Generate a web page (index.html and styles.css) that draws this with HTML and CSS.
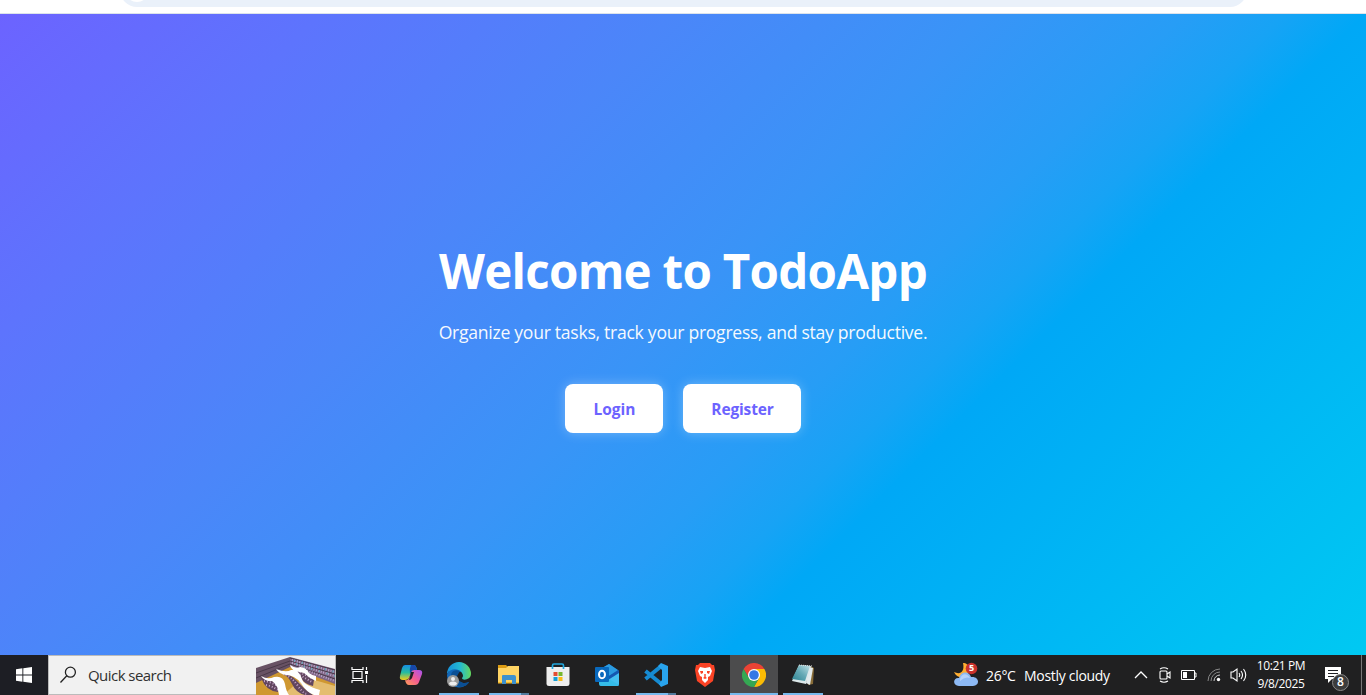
FILE: index.html
```
<!DOCTYPE html>
<html lang="en">
<head>
<meta charset="utf-8">
<title>TodoApp</title>
<link rel="stylesheet" href="styles.css">
</head>
<body>
<header class="browser-bar"><div class="address"><span class="site-dot"></span></div></header>
<main class="hero">
  <h1 class="title">Welcome to TodoApp</h1>
  <p class="subtitle">Organize your tasks, track your progress, and stay productive.</p>
  <div class="actions"><button class="btn login">Login</button><button class="btn register">Register</button></div>
</main>
<footer class="taskbar">
  <div class="start"><svg width="16" height="16" viewBox="0 0 16 16" fill="#fff"><path d="M0 2.2 6.4 1.3V7.5H0zM7.3 1.2 16 0V7.5H7.3zM0 8.4H6.4V14.7L0 13.8zM7.3 8.4H16V16L7.3 14.8z"/></svg></div>
  <div class="search">
    <svg class="lens" width="18" height="18" viewBox="0 0 18 18" fill="none" stroke="#222" stroke-width="1.3"><circle cx="10.4" cy="6.2" r="5"/><path d="M6.8 9.8.5 16.5"/></svg>
    <span class="search-text">Quick search</span>
    <svg class="library" width="79" height="39" viewBox="0 0 79 39">
      <path fill="#cf9831" d="M0 24 36 9 79 27V39H0z"/>
      <path fill="#e4bd70" d="M27 39 48 21 79 30V39z"/>
      <path fill="#685264" d="M0 12 34 1V11L0 27z"/>
      <path fill="#806584" d="M34 1 79 13V28L34 11z"/>
      <path stroke="#493948" d="M0 17 34 5M0 22 34 8M34 2 79 14M34 5 79 18M34 8 79 23" fill="none"/>
      <path stroke="#b8a7cb" stroke-width="2.2" stroke-dasharray="1 1.5" d="M36 4 79 16M36 7 79 20M44 12 79 25" fill="none"/>
      <path stroke="#5db0be" stroke-width="2.2" stroke-dasharray="1 7" d="M38 4.5 79 16M40 8 79 20" fill="none"/>
      <path fill="#62465f" d="M5 22Q15 24 22 27V36Q10 35 5 22zM23 16Q35 18 42 26T57 39H49Q40 37 36 28T23 16zM36 12Q46 16 52 18L58 24 57 30Q48 28 45 22z"/>
      <path stroke="#c6a6c9" stroke-width="2" stroke-dasharray="1 2" fill="none" d="M8 25Q15 26 22 30M10 29Q16 30 22 34M27 18Q35 20 42 30T52 37M41 15 56 22M44 19 56 26"/>
      <path fill="#fff" d="M5 20Q12 24 18 21 27 19 29 28 30 35 33 39H23Q22 29 16 25 9 26 5 20zM20 13Q30 17 35 14 43 13 46 23 47 29 64 34L63 39H58Q50 36 45 27 38 19 30 19 23 18 20 13zM34 9Q40 13 44 11 50 11 53 17 57 20 60 20V25Q53 22 48 17L39 15Q35 13 34 9z"/>
    </svg>
  </div>
  <div class="app task-view"><svg width="18" height="18" viewBox="0 0 18 18" fill="none" stroke="#fff" stroke-width="1.2"><path d="M1 1V3.5H12V1M1 17V14.5H12V17M2 5.5H11V12.5H2zM15.5 1V4M15.5 9V17"/><path fill="#fff" stroke="none" d="M14 5H17V8H14z"/></svg></div>
  <div class="app copilot"><svg width="24" height="24" viewBox="0 0 24 24"><defs><linearGradient id="ca" x1="0" y1="0" x2="0" y2="1"><stop stop-color="#168de4"/><stop offset=".5" stop-color="#27bca0"/><stop offset="1" stop-color="#f4cc16"/></linearGradient><linearGradient id="cb" x1="1" y1="0" x2="0" y2="1"><stop stop-color="#a653ef"/><stop offset=".5" stop-color="#f35a93"/><stop offset="1" stop-color="#ff9f54"/></linearGradient></defs><path fill="url(#ca)" d="M6 2H15Q17 2 18 7H15Q13 7 12 10L10 15Q9 17 6 17H4Q0 17 1 13L3 5Q4 2 6 2z"/><path fill="#1747a8" d="M12 2H15Q17 2 18 7H15Q13 7 12 9L11 11Q10 6 12 2z"/><path fill="url(#cb)" d="M15 7H20Q24 7 23 11L20 19Q19 22 16 22H10Q7 22 6 17Q9 18 10 15L12 10Q13 7 15 7z"/><path fill="#202125" d="M12 9H15L13 15Q12 17 10 17Z"/></svg></div>
  <div class="app running"><svg width="26" height="26" viewBox="0 0 26 26"><defs><linearGradient id="ea"><stop stop-color="#168fda"/><stop offset=".55" stop-color="#24bad0"/><stop offset="1" stop-color="#64d85d"/></linearGradient></defs><path fill="#1267b9" d="M1 13A12 12 0 0 0 23 20C17 23 11 19 11 14Q11 9 17 10C11 3 3 6 1 13z"/><path fill="url(#ea)" d="M1 12A12 12 0 0 1 25 12C25 18 16 19 16 16Q18 14 16 11C13 6 4 6 1 12z"/><path fill="#0b4f94" d="M6 10C3 16 7 24 14 25 20 25 23 21 23 20 17 23 11 19 11 14L14 9Q9 7 6 10z"/><circle cx="7" cy="19" r="6" fill="#999"/><circle cx="7" cy="17" r="2" fill="#eee"/><path fill="#eee" d="M3 22Q3 19.500 7 19.500T11 22L9 23.500H5z"/></svg></div>
  <div class="app running split"><svg width="24" height="22" viewBox="0 0 24 22"><path fill="#dc9c13" d="M1 1H9L11 3H22V8H1z"/><path fill="#ffd464" d="M1 4H9L11 2H22V19H1z"/><path fill="#f5b928" d="M1 18H22V19.5H1z"/><path fill="#3d91ce" d="M5 12Q5 11 6 11H17Q19 11 19 13V20H15V16H9V20H5z"/></svg></div>
  <div class="app"><svg width="24" height="24" viewBox="0 0 24 24"><path fill="#eee" d="M.5 4H23.500V21Q23.500 23 21 23H3Q.5 23 .5 21z"/><path fill="none" stroke="#20a8df" stroke-width="1.7" d="M6.500 6V2.500Q6.500 1 8 1H16Q17.500 1 17.500 2.500V6"/><path fill="#e54d31" d="M7.500 9H11.500V13H7.500z"/><path fill="#77b72d" d="M12.500 9H16.500V13H12.500z"/><path fill="#149dd5" d="M7.500 14H11.500V18H7.500z"/><path fill="#fabb15" d="M12.500 14H16.500V18H12.500z"/></svg></div>
  <div class="app"><svg width="26" height="24" viewBox="0 0 26 24"><path fill="#1464b9" d="M5 7 15 1 25 8V21Q25 23 23 23H6z"/><path fill="#2b9be0" d="M8 5 15 1 24 7 15 13 8 11z"/><path fill="#1557b0" d="M15 13 25 7V12L16 18z"/><path fill="#43bff0" d="M14 17 25 10V21Q25 23 23 23H10z"/><path fill="#35bce8" d="M5 17 15 16 25 22Q24 23 22 23H7Q5 23 5 21z"/><rect x="1" y="4" width="14" height="15" rx="1" fill="#0969bd"/><ellipse cx="8" cy="11.500" rx="3" ry="3.700" fill="none" stroke="#fff" stroke-width="2"/></svg></div>
  <div class="app running split"><svg width="26" height="26" viewBox="0 0 26 26"><path fill="none" stroke="#168bd2" stroke-width="4" d="M2.500 9 19 22.500M2.500 17 19 3.500"/><path fill="#29a4ed" d="M18 1 25 4V22L18 25 16 22 19 18V8L15 4z"/></svg></div>
  <div class="app"><svg width="22" height="24" viewBox="0 0 22 24"><path fill="#fb4325" d="M6 0H16L18 2H20L21 7 19 18 11 24 3 18 1 7 2 2H4z"/><path fill="#fff" d="M6 4 11 5 16 4 18 8 16 13 14 14 14 17 11 20 8 17 8 14 6 13 4 8z"/><path fill="#fb4325" d="M6 8 9 8 9 10 7 11zM16 8 13 8 13 10 15 11zM10.300 11H11.700V14L13 15 11 16 9 15 10.300 14z"/></svg></div>
  <div class="app running active"><svg width="24" height="24" viewBox="0 0 24 24"><path fill="#ea4335" d="M1.6 6A12 12 0 0 1 22.4 6H12L7 15z"/><path fill="#fbbc05" d="M22.4 6A12 12 0 0 1 12 24L17 15 17 9 12 6z"/><path fill="#34a853" d="M1.6 6A12 12 0 0 0 12 24L17 15H7z"/><circle cx="12" cy="12" r="6" fill="#fff"/><circle cx="12" cy="12" r="4.8" fill="#3478e5"/></svg></div>
  <div class="app running"><svg width="24" height="24" viewBox="0 0 24 24"><defs><linearGradient id="np" x1="1" y1="0" x2="0" y2="1"><stop stop-color="#bfe0e5"/><stop offset=".5" stop-color="#65a9b5"/><stop offset="1" stop-color="#2c8391"/></linearGradient></defs><path fill="#876b37" d="M19 3 23 5 22 21 17 22z"/><path fill="#e3ebed" d="M18 4 22 5 19 22 15 20z"/><path fill="#dce8ea" d="M8 2 20 3 15 21 1 18z"/><path fill="url(#np)" d="M8 2 19 3 14 18 1 16z"/><path stroke="#e4e4e4" stroke-dasharray="1 1" d="M8 2 21 3"/></svg></div>
  <div class="weather"><svg width="26" height="26" viewBox="0 0 26 26"><path fill="#ffae32" d="M10 1C12 10 7 13 1 10 4 18 17 17 16 6 16 3 13 1 10 1z"/><path fill="#8db9f4" d="M6 24C-1 24 0 15 6 16 8 9 16 9 18 15 27 14 27 24 20 24z"/><path fill="#b5d2fb" d="M7 17C9 11 14 11 17 16Q12 14 7 19z"/><circle cx="18.5" cy="6.5" r="5.8" fill="#c9312c"/></svg><span class="alert">5</span><span class="temp">26°C</span><span class="cond">Mostly cloudy</span></div>
  <div class="tray">
    <svg width="14" height="16" viewBox="0 0 14 16" fill="none" stroke="#fff" stroke-width="1.3"><path d="M1 11 7 5 13 11"/></svg>
    <svg width="14" height="18" viewBox="0 0 14 18" fill="none" stroke="#fff" stroke-width="1.1"><rect x="2" y="5" width="7" height="8" rx="1"/><path d="M9 8 12 6V12L9 10M2 3Q6 .5 10 3M2 15Q6 17.5 10 15"/></svg>
    <svg width="16" height="12" viewBox="0 0 16 12" fill="none" stroke="#fff"><path d="M.5 1.5H13.5V10.5H.5zM13.5 4H15V8H13.5"/><path fill="#fff" stroke="none" d="M2 3H6V9H2z"/></svg>
    <svg width="14" height="14" viewBox="0 0 14 14" fill="none" stroke="#888"><path d="M1 13A12 12 0 0 1 13 1M4 13A9 9 0 0 1 13 4"/><path stroke="#ccc" d="M7 13A6 6 0 0 1 13 7"/><circle cx="11.500" cy="11.500" r="1.700" fill="#fff" stroke="none"/></svg>
    <svg width="18" height="16" viewBox="0 0 18 16" fill="none" stroke="#fff" stroke-width="1.1"><path d="M1 5H3L7 2V14L3 11H1zM9 6Q10.5 8 9 10M11 4Q14 8 11 12M13.5 2Q18 8 13.5 14"/></svg>
  </div>
  <div class="clock"><span class="time">10:21 PM</span><span class="date">9/8/2025</span></div>
  <div class="notice"><svg width="26" height="26" viewBox="0 0 26 26"><path fill="#fff" d="M1 2H17V14H8L4 18V14H1z"/><path stroke="#202125" d="M4 5.5H14M4 8.5H14M4 11.5H10"/><circle cx="16.500" cy="17.500" r="8" fill="#3c3c3c" stroke="#888"/></svg><span class="count">8</span></div>
</footer>
</body>
</html>
```
FILE: styles.css
```
* { box-sizing: border-box; }
body { margin: 0; width: 1366px; height: 695px; overflow: hidden; display: flex; flex-direction: column; font-family: "Open Sans", "Noto Sans", sans-serif; }
svg { display: block; flex: none; }
.browser-bar { height: 14px; flex: none; background: #fff; border-bottom: 1px solid #dce3eb; padding-left: 120px; overflow: hidden; }
.address { width: 1127px; height: 34px; margin-top: -27px; border-radius: 17px; background: #eaf1fa; padding: 5px; }
.site-dot { display: block; width: 24px; height: 24px; border-radius: 50%; background: #fff; }
.hero { height: 641px; flex: none; background: linear-gradient(135deg, #6c63ff 0%, #5d74fd 16%, #4b86f9 33.5%, #3994f7 49%, #279df6 59%, #17a3f5 64%, #00a8f6 68%, #00c9f2 100%); display: flex; flex-direction: column; align-items: center; color: #fff; }
.title { margin: 225px 0 0; font-size: 47.5px; line-height: 64px; font-weight: 700; white-space: nowrap; letter-spacing: -.72px; }
.subtitle { margin: 16px 0 0; font-size: 17.6px; line-height: 26px; white-space: nowrap; opacity: .95; letter-spacing: -.28px; }
.actions { display: flex; gap: 20px; margin-top: 39px; }
.btn { height: 49px; border: 0; border-radius: 8px; background: #fff; color: #6c63ff; font: 700 15.5px/22px "Open Sans", sans-serif; padding: 1px 0 0 1px; box-shadow: 0 0 12px rgba(255, 255, 255, .3); }
.login { width: 98px; }
.register { width: 118px; letter-spacing: -.15px; }
.taskbar { height: 40px; flex: none; display: flex; background: #202021; color: #fff; }
.start { width: 48px; display: flex; align-items: center; justify-content: center; background: #1d1e24; }
.search { width: 288px; background: #f1f1f1; border: 1px solid #bbb; display: flex; align-items: center; }
.lens { margin-left: 11px; }
.search-text { margin-left: 10px; font-size: 15px; color: #303030; width: 88px; white-space: nowrap; letter-spacing: -.55px; }
.library { margin-left: auto; }
.app { width: 49.2px; height: 40px; display: flex; align-items: center; justify-content: center; flex: none; padding-left: 1px; }
.task-view { padding: 0 1px 0 0; }
.copilot { padding-left: 2px; }
.running { background: linear-gradient(#76b9ed, #76b9ed) 5px bottom / 40px 2px no-repeat; }
.split { background: linear-gradient(90deg, #76b9ed 80%, #517a9c 80%) 5px bottom / 40px 2px no-repeat; }
.active { background: linear-gradient(#76b9ed, #76b9ed) center bottom / 48px 2px no-repeat, #4c4c4d; width: 48px; padding: 0; }
.weather { margin-left: auto; width: 170px; display: flex; align-items: center; position: relative; font-size: 14px; white-space: nowrap; letter-spacing: -.3px; }
.alert { position: absolute; left: 16px; top: 6px; font-size: 9px; line-height: 13px; font-weight: 700; }
.temp { margin-left: 7px; width: 38px; }
.cond { width: 90px; }
.tray { display: flex; width: 127px; align-items: center; padding-left: 11px; gap: 9.5px; }
.clock { width: 62px; font-size: 12px; line-height: 18px; padding-top: 2px; text-align: center; display: flex; flex-direction: column; letter-spacing: -.4px; }
.notice { width: 50px; height: 40px; border-right: 1px solid #777; margin-right: 4px; padding: 10px 0 0 12px; position: relative; }
.count { position: absolute; left: 25px; top: 19px; font-size: 12px; line-height: 16px; font-weight: 600; }
```
